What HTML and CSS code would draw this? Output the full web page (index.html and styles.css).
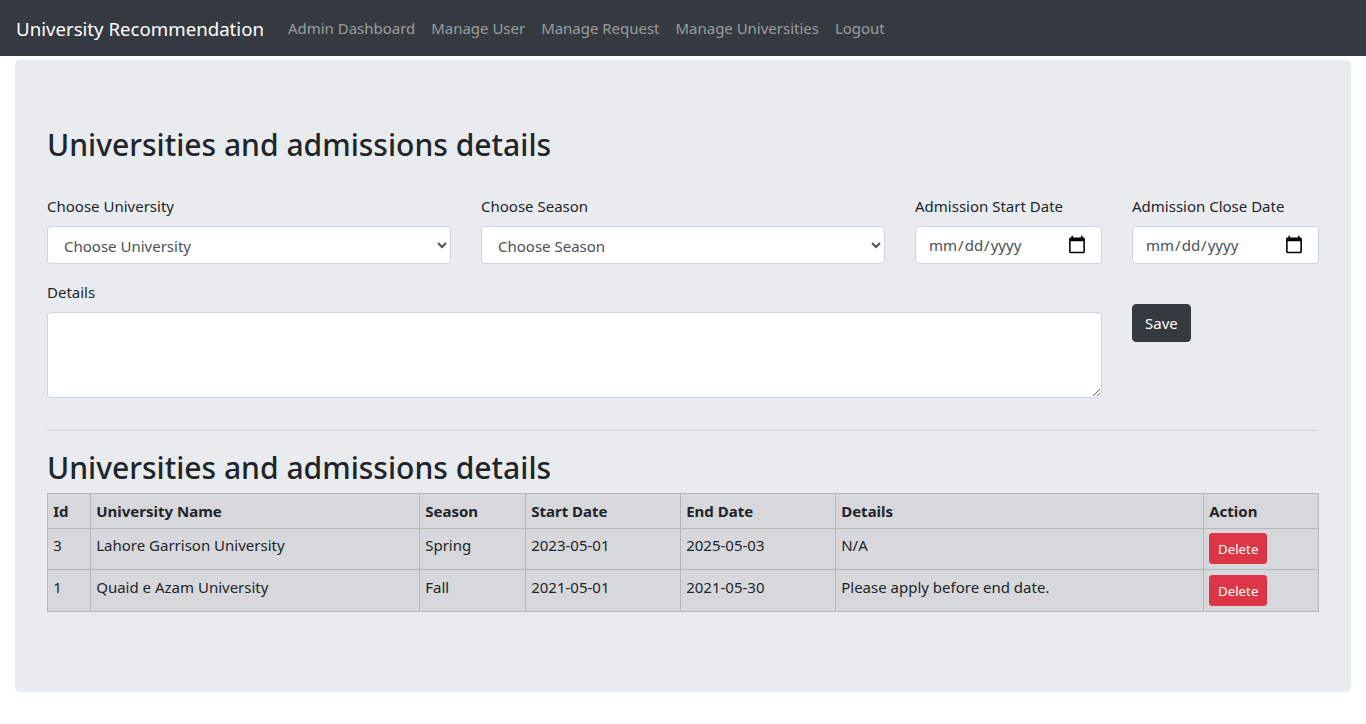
FILE: index.html
```html
<!DOCTYPE html>
<html lang="en">
<head>
	<meta charset="UTF-8">
	<title>Manage Universities</title>
	<link rel="stylesheet" href="styles.css">
</head>
<body>
	<nav class="navbar">
		<a class="brand" href="#">University Recommendation</a>
		<ul class="nav-links">
			<li><a href="#">Admin Dashboard</a></li>
			<li><a href="#">Manage User</a></li>
			<li><a href="#">Manage Request</a></li>
			<li><a href="#">Manage Universities</a></li>
			<li><a href="#">Logout</a></li>
		</ul>
	</nav>
	<main class="jumbotron">
		<h1 class="title">Universities and admissions details</h1>
		<form class="form-grid">
			<div class="field span-4">
				<label>Choose University</label>
				<select class="control pick"><option>Choose University</option></select>
			</div>
			<div class="field span-4">
				<label>Choose Season</label>
				<select class="control pick"><option>Choose Season</option></select>
			</div>
			<div class="field span-2">
				<label>Admission Start Date</label>
				<input class="control date" type="date">
			</div>
			<div class="field span-2">
				<label>Admission Close Date</label>
				<input class="control date" type="date">
			</div>
			<div class="field span-10">
				<label>Details</label>
				<textarea class="control details"></textarea>
			</div>
			<div class="field span-2 save-col">
				<button class="btn btn-dark" type="button">Save</button>
			</div>
		</form>
		<hr>
		<h1 class="title table-title">Universities and admissions details</h1>
		<table class="data-table">
			<thead>
				<tr>
					<th class="c-id">Id</th>
					<th class="c-name">University Name</th>
					<th class="c-season">Season</th>
					<th class="c-date">Start Date</th>
					<th class="c-date">End Date</th>
					<th class="c-details">Details</th>
					<th>Action</th>
				</tr>
			</thead>
			<tbody>
				<tr>
					<td>3</td>
					<td>Lahore Garrison University</td>
					<td>Spring</td>
					<td>2023-05-01</td>
					<td>2025-05-03</td>
					<td>N/A</td>
					<td><button class="btn btn-sm" type="button">Delete</button></td>
				</tr>
				<tr>
					<td>1</td>
					<td>Quaid e Azam University</td>
					<td>Fall</td>
					<td>2021-05-01</td>
					<td>2021-05-30</td>
					<td>Please apply before end date.</td>
					<td><button class="btn btn-sm" type="button">Delete</button></td>
				</tr>
			</tbody>
		</table>
	</main>
</body>
</html>
```
FILE: styles.css
```css
*{
	box-sizing: border-box;
}
body{
	margin: 0;
	font-family: "Noto Sans", "Open Sans", sans-serif;
	font-size: 15px;
	line-height: 24px;
	color: #212529;
	background: #fff;
}
a{
	text-decoration: none;
}
.navbar{
	display: flex;
	align-items: center;
	height: 56px;
	padding: 0 16px;
	background: #343a40;
}
.brand{
	margin-right: 16px;
	padding-top: 2px;
	font-size: 18.65px;
	color: #fff;
}
.nav-links{
	display: flex;
	margin: 0;
	padding: 0;
	list-style: none;
	font-size: 14.97px;
}
.nav-links a{
	display: block;
	padding: 8px;
	color: rgba(255,255,255,.5);
}
.jumbotron{
	height: 632px;
	margin: 4px 15px 0;
	padding: 64px 32px;
	border-radius: 5px;
	background: #e9ecef;
}
.title{
	margin: 0 0 8px;
	font-size: 30.05px;
	font-weight: 500;
	line-height: 42px;
}
.form-grid{
	display: grid;
	grid-template-columns: repeat(12, 1fr);
	column-gap: 30px;
	margin-top: 28px;
}
.field{
	margin-bottom: 16px;
}
.field label{
	display: block;
	margin-bottom: 8px;
}
.span-2{
	grid-column: span 2;
}
.span-4{
	grid-column: span 4;
}
.span-10{
	grid-column: span 10;
}
.control{
	display: block;
	width: 100%;
	height: 38px;
	padding: 6px 12px;
	border: 1px solid #ced4da;
	border-radius: 4px;
	background: #fff;
	font: inherit;
	color: #495057;
}
.pick{
	padding: 7px 12px 5px;
}
.date::-webkit-calendar-picker-indicator{
	width: 20px;
	height: 20px;
	margin-right: 2px;
	padding: 0;
}
.details{
	height: 86px;
	resize: vertical;
}
.save-col{
	padding-top: 24px;
}
.btn{
	padding: 6px 12px;
	border: 1px solid #343a40;
	border-radius: 4px;
	font: inherit;
	color: #fff;
}
.btn-dark{
	height: 38px;
	background: #343a40;
}
.btn-sm{
	display: block;
	width: 58px;
	height: 31px;
	padding: 5px 0 3px;
	border-color: #dc3545;
	border-radius: 3px;
	background: #dc3545;
	font-size: 13.3px;
	line-height: 21px;
}
hr{
	margin: 16px 0;
	border: 0;
	border-top: 1px solid rgba(0,0,0,.1);
}
.table-title{
	margin: 0 0 4px;
}
.data-table{
	width: 100%;
	table-layout: fixed;
	border-collapse: collapse;
	background: #d6d8db;
}
.data-table th,
.data-table td{
	padding: 4.8px 4.8px 4.8px 5.2px;
	border: 1px solid #b3b7bb;
	text-align: left;
	vertical-align: top;
}
.data-table th{
	font-weight: 700;
}
.c-id{
	width: 43px;
}
.c-name{
	width: 329px;
}
.c-season{
	width: 106px;
}
.c-date{
	width: 155px;
}
.c-details{
	width: 368px;
}
```
